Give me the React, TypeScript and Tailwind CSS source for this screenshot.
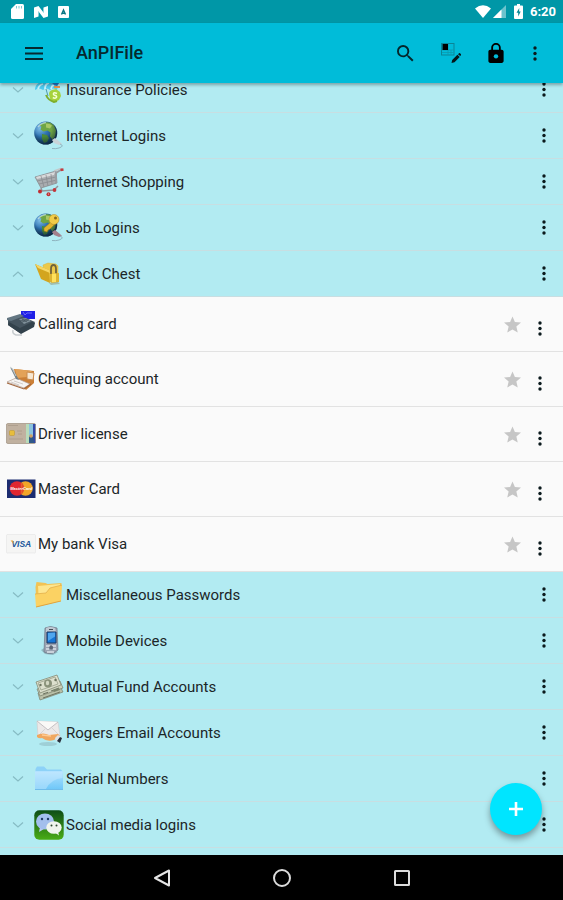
import { useState } from 'react';
import type { ReactNode } from 'react';

type Entry = { name: string; icon: ReactNode };
type Category = { name: string; icon: ReactNode; entries?: Entry[] };

const CATEGORIES: Category[] = [
  { name: 'Insurance Policies', icon: <InsuranceIcon /> },
  { name: 'Internet Logins', icon: <GlobeIcon /> },
  { name: 'Internet Shopping', icon: <CartIcon /> },
  { name: 'Job Logins', icon: <GlobeIcon withKey /> },
  {
    name: 'Lock Chest',
    icon: <LockFolderIcon />,
    entries: [
      { name: 'Calling card', icon: <PhoneCardIcon /> },
      { name: 'Chequing account', icon: <ChequeIcon /> },
      { name: 'Driver license', icon: <LicenseIcon /> },
      { name: 'Master Card', icon: <MasterCardIcon /> },
      { name: 'My bank Visa', icon: <VisaIcon /> },
    ],
  },
  { name: 'Miscellaneous Passwords', icon: <YellowFolderIcon /> },
  { name: 'Mobile Devices', icon: <MobileIcon /> },
  { name: 'Mutual Fund Accounts', icon: <MoneyIcon /> },
  { name: 'Rogers Email Accounts', icon: <MailIcon /> },
  { name: 'Serial Numbers', icon: <BlueFolderIcon /> },
  { name: 'Social media logins', icon: <ChatIcon /> },
];

export default function App() {
  const [open, setOpen] = useState<string | null>('Lock Chest');

  return (
    <div className="flex h-screen flex-col overflow-hidden bg-[#b2ebf2] font-['Roboto',sans-serif] text-[#1c2628]">
      <StatusBar />
      <AppBar />

      <main className="relative min-h-0 flex-1">
        <div className="h-full overflow-hidden">
          <ul className="-mt-4">
            {CATEGORIES.map(cat => (
              <li key={cat.name}>
                <CategoryRow
                  category={cat}
                  expanded={open === cat.name}
                  onToggle={() => setOpen(open === cat.name ? null : cat.name)}
                />
                {open === cat.name && cat.entries && (
                  <ul className="bg-[#fafafa]">
                    {cat.entries.map(entry => (
                      <EntryRow key={entry.name} entry={entry} />
                    ))}
                  </ul>
                )}
              </li>
            ))}
          </ul>
        </div>

        <button
          aria-label="Add"
          className="absolute right-[21px] bottom-5 flex size-[52px] items-center justify-center rounded-full bg-[#00e5ff] shadow-[0_4px_6px_rgba(0,0,0,0.35)]"
        >
          <svg viewBox="0 0 14 14" className="size-3.5" fill="#fff">
            <path d="M5.700 0h2.600v5.700H14v2.600H8.300V14H5.700V8.300H0V5.700h5.700z" />
          </svg>
        </button>
      </main>

      <NavBar />
    </div>
  );
}

function StatusBar() {
  return (
    <div className="flex h-[23px] shrink-0 items-center justify-between bg-[#0097a7] pr-[7px] pl-[11px] text-white">
      <div className="flex items-center gap-2.5">
        <svg viewBox="0 0 13 15" className="h-[15px] w-[13px]">
          <path d="M5 0h6.500Q13 0 13 1.500V13.500Q13 15 11.500 15H1.500Q0 15 0 13.500V5z" fill="#fff" />
          <path d="M5.500 2v2.500M8 2v2.500M10.500 2v2.500" stroke="#7fc9d2" strokeWidth="1" />
        </svg>
        <svg viewBox="0 0 14 12" className="h-3 w-3.5">
          <path d="M0 1.500 4.500 0 9.500 6.500V1.500L14 0v10.500L9.500 12 4.500 5.500v5L0 12z" fill="#fff" />
          <path d="M4.500 5.500v4M9.500 2v4.500" stroke="#8fd0d8" strokeWidth="1" />
        </svg>
        <svg viewBox="0 0 11 12" className="h-3 w-[11px]">
          <rect width="11" height="12" rx="1" fill="#fff" />
          <path d="M3.500 8.500 5.500 4 7.500 8.500M4.200 7.200h2.600" fill="none" stroke="#0a7784" strokeWidth="1.400" />
        </svg>
      </div>
      <div className="flex items-center">
        <svg viewBox="0 0 16 13" className="h-[13px] w-4">
          <path d="M8 13 0 3.500Q8-3 16 3.500z" fill="#fff" />
        </svg>
        <svg viewBox="0 0 13 13" className="ml-0.5 h-[13px] w-[13px]">
          <path d="M13 0v13H0z" fill="#6cc3cd" />
          <path d="M8.500 4.500V13H0z" fill="#fff" />
        </svg>
        <svg viewBox="0 0 9 15" className="ml-2 h-[15px] w-[9px]">
          <path d="M3 0h3v1.500h2Q9 1.500 9 2.500V14Q9 15 8 15H1Q0 15 0 14V2.500Q0 1.500 1 1.500h2z" fill="#fff" />
          <path d="M5.300 4 2.500 8.700h1.700V12.500L6.700 7.500H5.100z" fill="#0a8795" />
        </svg>
        <span className="ml-[7px] text-[13px] leading-4 font-bold">6:20</span>
      </div>
    </div>
  );
}

function AppBar() {
  return (
    <header className="z-10 flex h-[60px] shrink-0 items-center bg-[#00bcd9] pr-[11px] pl-4 text-black shadow-[0_2px_3px_rgba(0,0,0,0.3)]">
      <button aria-label="Menu" className="flex w-9 justify-center">
        <svg viewBox="0 0 18 13" className="h-[13px] w-[18px]" stroke="#062a30" strokeWidth="2">
          <path d="M0 1h18M0 6.500h18M0 12h18" />
        </svg>
      </button>
      <h1 className="ml-6 flex-1 text-[18px] leading-6 font-medium text-[#06282e]">AnPIFile</h1>
      <button aria-label="Search" className="flex w-[45px] justify-center">
        <svg viewBox="3 3 18 18" className="size-[17px]" fill="#04262b">
          <path d="M15.500 14h-.79l-.28-.27A6.471 6.471 0 0 0 16 9.500 6.500 6.500 0 1 0 9.500 16c1.610 0 3.090-.59 4.230-1.570l.27.28v.79l5 4.990L20.490 19l-4.990-5zm-6 0C7.010 14 5 11.990 5 9.500S7.010 5 9.500 5 14 7.010 14 9.500 11.990 14 9.500 14z" />
        </svg>
      </button>
      <button aria-label="Edit layout" className="flex w-[45px] justify-center">
        <svg viewBox="0 0 20 20" className="size-5">
          <rect x=".5" y=".5" width="12.500" height="11.500" fill="none" stroke="#0a8597" />
          <path d="M7 .500V12M.500 7H13M1 9.500H13M10 7V12" stroke="#0a9aae" strokeWidth=".8" />
          <path d="M1.500 1h5.500v6H1.500z" fill="#000" />
          <path d="m10.500 20 .7-3 5.200-5.200 2.300 2.300-5.200 5.200zM17 11.200l1-1q.5-.4 1 0l1 1q.5.500 0 1l-.9.900z" fill="#04161a" />
        </svg>
      </button>
      <button aria-label="Lock" className="flex w-[45px] justify-center">
        <svg viewBox="4 1 16 21" className="h-5 w-4" fill="#000">
          <path d="M18 8h-1V6c0-2.760-2.240-5-5-5S7 3.240 7 6v2H6c-1.100 0-2 .9-2 2v10c0 1.100.9 2 2 2h12c1.100 0 2-.9 2-2V10c0-1.100-.9-2-2-2zM8.900 6a3.100 3.100 0 0 1 6.200 0v2H8.900z" />
          <circle cx="12" cy="15" r="2.300" fill="#00bcd9" />
        </svg>
      </button>
      <button aria-label="More options" className="flex w-[34px] justify-center">
        <Kebab />
      </button>
    </header>
  );
}

function CategoryRow({ category, expanded, onToggle }: { category: Category; expanded: boolean; onToggle: () => void }) {
  return (
    <div className="flex h-[46px] items-center border-b border-[#c8dee2] pr-3">
      <button onClick={onToggle} aria-expanded={expanded} className="flex flex-1 items-center pl-3 text-left">
        <svg viewBox="0 0 12 6" className="mr-2.5 h-1.5 w-3" fill="none" stroke="#86bcc4" strokeWidth="1.200">
          {expanded ? <path d="M1 5.500 6 1l5 4.500" /> : <path d="m1 .500 5 4.500 5-4.500" />}
        </svg>
        <span className="mr-0.5 size-[30px]">{category.icon}</span>
        <span className="text-[15px] leading-5">{category.name}</span>
      </button>
      <button aria-label={`${category.name} options`} className="flex w-3.5 justify-center">
        <Kebab />
      </button>
    </div>
  );
}

function EntryRow({ entry }: { entry: Entry }) {
  const [starred, setStarred] = useState(false);

  return (
    <li className="flex h-[55px] items-center border-b border-[#e2e2e2] pr-4 pl-1.5">
      <span className="mr-0.5 size-[30px]">{entry.icon}</span>
      <span className="flex-1 text-[15px] leading-5">{entry.name}</span>
      <button aria-label={`Star ${entry.name}`} aria-pressed={starred} onClick={() => setStarred(!starred)} className="mr-3">
        <svg viewBox="2 2 20 19" className="size-[17px]" fill={starred ? '#ffb300' : '#c6c6c6'}>
          <path d="M12 17.270 18.180 21l-1.640-7.030L22 9.240l-7.190-.61L12 2 9.190 8.630 2 9.240l5.460 4.730L5.820 21z" />
        </svg>
      </button>
      <button aria-label={`${entry.name} options`} className="flex w-3.5 justify-center pt-2">
        <Kebab />
      </button>
    </li>
  );
}

function Kebab() {
  return (
    <svg viewBox="0 0 4 15" className="h-[15px] w-1" fill="#0b1a1d">
      <circle cx="2" cy="2" r="1.700" />
      <circle cx="2" cy="7.500" r="1.700" />
      <circle cx="2" cy="13" r="1.700" />
    </svg>
  );
}

function NavBar() {
  return (
    <nav className="z-10 flex h-[45px] shrink-0 items-center justify-center bg-black">
      <button aria-label="Back" className="flex w-[120px] justify-center">
        <svg viewBox="0 0 18 18" className="size-[18px]" fill="none" stroke="#e6e6e6" strokeWidth="2">
          <path d="M16 1.500v15L2 9z" strokeLinejoin="round" />
        </svg>
      </button>
      <button aria-label="Home" className="flex w-[120px] justify-center">
        <svg viewBox="0 0 18 18" className="size-[18px]" fill="none" stroke="#dcdcdc" strokeWidth="2">
          <circle cx="9" cy="9" r="8" />
        </svg>
      </button>
      <button aria-label="Recent apps" className="flex w-[120px] justify-center">
        <svg viewBox="0 0 18 18" className="size-[18px]" fill="none" stroke="#dcdcdc" strokeWidth="2">
          <rect x="2" y="2" width="14" height="14" rx=".5" />
        </svg>
      </button>
    </nav>
  );
}

// Row icons, all on a 30x30 grid

function InsuranceIcon() {
  return (
    <svg viewBox="0 0 30 30" className="size-full">
      <path d="M1 15Q1 9 7 7q2-5 8-3 5-2 7 3 3 3 1 8-4-3-7 0-4-3-7 0-4-3-8 0z" fill="#4fcbf0" />
      <path d="M4 14q1-4 5-5M11 14q0-5 4-6M17 14q1-4 3-4" stroke="#c6f4ff" strokeWidth="1.800" fill="none" />
      <path d="m18 9 7-6 3 1-5 7z" fill="#2577c9" />
      <path d="M20 12h6" stroke="#e8924a" strokeWidth="2" />
      <path d="m12 14 2 7" stroke="#4d99ae" strokeWidth="1" />
      <path d="M15 19q0-3 3-4l4-1 4 3 1 4-2 4-4 2-4-1-1-3z" fill="#a6d23c" />
      <path d="M12 20q2 5 8 7l3-1" stroke="#7fae2c" strokeWidth="2" fill="none" />
      <path d="M23 18.500q-3-1.500-3.500 0t1.800 2q2 .7 1 2-1.300 1.300-3.500 0" stroke="#f5ffd2" strokeWidth="1.500" fill="none" />
    </svg>
  );
}

function GlobeIcon({ withKey = false }: { withKey?: boolean }) {
  return (
    <svg viewBox="0 0 30 30" className="size-full">
      <defs>
        <radialGradient id="globe" cx=".25" cy=".3" r=".85">
          <stop offset="0" stopColor="#7fbde6" />
          <stop offset=".4" stopColor="#2f73b3" />
          <stop offset="1" stopColor="#0b2a55" />
        </radialGradient>
        <radialGradient id="globeShade" cx=".4" cy=".3" r=".7">
          <stop offset=".5" stopColor="#0b2a33" stopOpacity="0" />
          <stop offset="1" stopColor="#0b2233" stopOpacity=".65" />
        </radialGradient>
      </defs>
      <circle cx="11.700" cy="12" r="11.500" fill="url(#globe)" />
      <path d="M7 3q5-3 10-1l3 2.500 2 5-1 6-2.500 3-2.500-3 .5-4-3-2-4 1-3-2 1-3-2.500-1z" fill="#6fa544" />
      <path d="M12 2.500q4 0 6 2l-2 3-4-1z" fill="#a8c866" />
      <path d="m8 13 5 1 2 3-2 4-3 1-2-4z" fill="#4c8a38" />
      <circle cx="11.700" cy="12" r="11.500" fill="url(#globeShade)" />
      <path d="M4 6q3-4 8-4.500" stroke="#e1f5f1" strokeWidth="1.500" fill="none" opacity=".6" />
      {withKey && (
        <>
          <path d="m17 9-7 6v3l3 1 1-2 2-1 5-5z" fill="#e1b52d" stroke="#9b7619" strokeWidth=".5" />
          <circle cx="20" cy="6.500" r="5" fill="#f1cc48" stroke="#a8822a" strokeWidth=".5" />
          <circle cx="21.500" cy="5" r="1.500" fill="#8d6b18" />
        </>
      )}
      <path d="m18 19 3-2 5 4 2 2-3 1-5-2z" fill={withKey ? '#a3808c' : '#c9d3d8'} />
      <path d="M26 23q5 2-1 4-3 1-7 .500" stroke="#8fb5c0" strokeWidth="1" fill="none" />
    </svg>
  );
}

function CartIcon() {
  return (
    <svg viewBox="0 0 30 30" className="size-full">
      <path d="m1 10 21-6 1 12-16 5z" fill="#a9acaf" stroke="#8a8d90" strokeWidth=".8" />
      <path d="m2 10 19-5-1 3-17 4z" fill="#d9dadb" />
      <path d="m3 14 19-4M5 17l18-4M7 9l3 11M12 8l2 11M17 7l1 10" stroke="#85888c" strokeWidth=".7" />
      <path d="m22 16 0-10 6-4" stroke="#999da1" strokeWidth="1.800" fill="none" />
      <path d="m20 4 7-2.500" stroke="#c4c6c8" strokeWidth="1.500" />
      <path d="m26.500 3 3-.500" stroke="#c33b3f" strokeWidth="2.500" />
      <path d="m7 21 1 3 12-1 4-4" stroke="#909499" strokeWidth="1.500" fill="none" />
      <circle cx="6" cy="24.500" r="2" fill="#c02e32" />
      <circle cx="14.500" cy="27.300" r="2" fill="#c02e32" />
      <circle cx="20.500" cy="23" r="1.900" fill="#c2383d" />
      <circle cx="14.500" cy="27" r=".6" fill="#ecc" />
    </svg>
  );
}

function LockFolderIcon() {
  return (
    <svg viewBox="0 0 30 30" className="size-full">
      <path d="m9 6 5-2 8 1 2 2v15l-13-1z" fill="#edc949" stroke="#d9b23c" strokeWidth=".5" />
      <path d="m1 5 14 6 1 13-9-4z" fill="#d3a51f" />
      <path d="m1 5 14 6 1 3L4 9z" fill="#f6d765" />
      <path d="M17 15v-5q0-4 2.500-4T22 10v5" fill="none" stroke="#70633c" strokeWidth="1.800" />
      <path d="m16 15 9-1v9l-7 1-2-1z" fill="#ddb431" />
      <path d="m18 15 4-.500V23l-4 .5z" fill="#ffe15c" />
      <path d="m15 24 9-1 2 2-9 1z" fill="#8a7a45" opacity=".4" />
    </svg>
  );
}

function PhoneCardIcon() {
  return (
    <svg viewBox="0 0 30 30" className="size-full">
      <path d="M15 2h14v8H18l-3-3z" fill="#2020e6" />
      <path d="m17 3 2 3 2-2h5" stroke="#6d6af5" strokeWidth="1" fill="none" />
      <path d="m2 11 11-5 16 7-3 5-12 6-12-8z" fill="#45545f" />
      <path d="m1 9 13-4 4 2-13 5-4-1z" fill="#637682" />
      <path d="m3 13 11 6 12-6 3 1-1 4-13 7-13-9z" fill="#33424c" />
      <path d="m13 10 7-1 5 3-7 3z" fill="#7f909a" />
      <path d="m14 12 8-2M16 13l7-2M16 10l5 3" stroke="#3c4a54" strokeWidth=".7" />
      <path d="M7 21q-1 4 3 5h6" stroke="#c7cccf" strokeWidth="1.500" fill="none" />
    </svg>
  );
}

function ChequeIcon() {
  return (
    <svg viewBox="0 0 30 30" className="size-full">
      <path d="m8 5 20 2v12l-8 7L10 15z" fill="#cb7f36" />
      <path d="m9 5 17 2-5 6-10 1z" fill="#e3a258" />
      <path d="m21 8 7 1-1 7-6-1z" fill="#f7e7d1" stroke="#c98a4c" strokeWidth="1" />
      <path d="m1 18 9-4 14 6-6 4z" fill="#f6f4f2" stroke="#b09a8c" strokeWidth=".7" />
      <path d="m5 18 8 3M8 17l9 3" stroke="#c9c2bd" strokeWidth=".8" />
      <path d="m1 19 17 6 7-5" stroke="#a3663c" strokeWidth="1.100" fill="none" />
      <path d="m4 3 3 2 6 11-3-1z" fill="#748085" />
      <path d="m4 3 2 1 4 8" stroke="#d8dfe1" strokeWidth=".8" fill="none" />
    </svg>
  );
}

function LicenseIcon() {
  return (
    <svg viewBox="0 0 30 30" className="size-full">
      <rect x=".4" y="4.500" width="29.200" height="20" rx="1.500" fill="#c0b1a0" stroke="#9d8f80" strokeWidth=".7" />
      <path d="M20 5h4v19h-4z" fill="#b8dbba" />
      <path d="M23 5h4v19h-4z" fill="#8cc4de" />
      <path d="M27 5h2.300v19H27z" fill="#3048a8" />
      <rect x="3.500" y="11.500" width="5" height="5" rx="1" fill="#e7bd3b" stroke="#b8922f" strokeWidth=".5" />
      <path d="M2 6.500h10M11 12h5M12 15h4M3 20h14" stroke="#a99a89" strokeWidth=".8" />
      <path d="M23 18q2-3 4 0l1 6h-5z" fill="#305987" />
      <circle cx="25" cy="17" r="1.800" fill="#d3a064" />
    </svg>
  );
}

function MasterCardIcon() {
  return (
    <svg viewBox="0 0 30 30" className="size-full">
      <rect x="1" y="5.500" width="28.500" height="18.500" fill="#1c2c70" />
      <circle cx="19.500" cy="14.500" r="7.300" fill="#f1a529" />
      <circle cx="11" cy="14.500" r="7.300" fill="#df2630" />
      <path d="M15.300 9v11M17 10v9" stroke="#ee8b28" strokeWidth=".7" />
      <text x="15.200" y="16.200" textAnchor="middle" fontSize="4" fontWeight="700" fontStyle="italic" fill="#fff" fontFamily="Liberation Sans, sans-serif">MasterCard</text>
    </svg>
  );
}

function VisaIcon() {
  return (
    <svg viewBox="0 0 30 30" className="size-full">
      <rect x=".5" y="5.500" width="29" height="18.500" rx="1" fill="#f5f5f4" stroke="#e6e6e6" strokeWidth=".7" />
      <text x="15.300" y="18" textAnchor="middle" fontSize="8.500" fontWeight="700" fontStyle="italic" fill="#21579a" fontFamily="Liberation Sans, sans-serif">VISA</text>
      <path d="M4.500 11.500H7l1 3.500z" fill="#e8a33a" />
    </svg>
  );
}

function YellowFolderIcon() {
  return (
    <svg viewBox="0 0 30 30" className="size-full">
      <path d="m1.500 7 1-5 9 1 2 1 14-1-1 18-24 6z" fill="#f2c354" />
      <path d="m4 6 22-2v14L5 24z" fill="#fde68f" />
      <path d="m1 14 11-1 4-5 12-3-1 16-25 6z" fill="#fbd263" />
      <path d="m1 14 11-1 4-5 12-3" stroke="#e3b04a" strokeWidth=".8" fill="none" />
      <path d="m2 27 25-6" stroke="#e0a440" strokeWidth="1" />
    </svg>
  );
}

function MobileIcon() {
  return (
    <svg viewBox="0 0 30 30" className="size-full">
      <path d="m7 24 5-3 12 5-5 3-8-1z" fill="#6d8794" opacity=".5" />
      <path d="M11 2q5-3 12 0l1 22q-6 6-14 2z" fill="#9aa3b2" stroke="#6d7787" strokeWidth=".7" />
      <path d="M12 2q4-2 9 0l1 4H12z" fill="#bfc9d3" />
      <path d="M13 6h9v11h-9z" fill="#1676d5" stroke="#1d3960" strokeWidth="1" />
      <path d="m14 7 7-.500v4L14 15z" fill="#4fa6ee" />
      <path d="M12 20h4M18 20h4M12 23h3M19 23h3M13 26h7" stroke="#dae1e7" strokeWidth="1.300" />
      <circle cx="17.200" cy="21.500" r="1.900" fill="#5c6674" />
      <path d="M15 3.500h4" stroke="#424c58" strokeWidth="1" />
    </svg>
  );
}

function MoneyIcon() {
  return (
    <svg viewBox="0 0 30 30" className="size-full">
      <path d="m4 21 22-7 3 6-23 8z" fill="#b9bfa8" stroke="#7a806c" strokeWidth=".7" />
      <path d="m3 17 23-8 3 7-23 8z" fill="#cad0bb" stroke="#7a806c" strokeWidth=".7" />
      <path d="m2 10 21-7 4 10-21 8z" fill="#dcdfcd" stroke="#858b76" strokeWidth=".8" />
      <path d="m4 11 17-6 3 7-17 6z" fill="none" stroke="#9aa18c" strokeWidth=".8" />
      <ellipse cx="14" cy="11.500" rx="4" ry="4" fill="#8a927a" />
      <ellipse cx="13.500" cy="11" rx="1.700" ry="2.300" fill="#d3d7c3" />
      <circle cx="6.500" cy="13" r="1.200" fill="#6d7560" />
      <circle cx="21.500" cy="8" r="1.200" fill="#6d7560" />
      <path d="m9 22 5-1.700M17 19l8-3M9 26l17-6" stroke="#636a58" strokeWidth=".9" />
      <path d="m19 18 6-2 1 2-6 2z" fill="#7b846c" />
    </svg>
  );
}

function MailIcon() {
  return (
    <svg viewBox="0 0 30 30" className="size-full">
      <ellipse cx="14" cy="26" rx="9" ry="2" fill="#89b4bc" opacity=".5" />
      <path d="m3 3 21 1 2 14-22 1z" fill="#ece9e8" stroke="#d2cfd0" strokeWidth=".7" />
      <path d="m3 3 11 9L24 4" fill="#faf9f7" stroke="#c4c0c3" strokeWidth="1" />
      <path d="m4 18 7-7M25 17l-7-7" stroke="#d0cdce" strokeWidth=".8" />
      <path d="M3 17q6-3 12 0l9-1 2 2-6 4q-7 2-12-2-3 1-5-1z" fill="#f0a75f" />
      <path d="m8 17 9 1" stroke="#ffcb92" strokeWidth="1.500" />
      <path d="m21 20 3-3 4 3-2 4-4-1z" fill="#dce2e7" />
      <path d="m23 23 3-4 2 1-2 5z" fill="#26303b" />
    </svg>
  );
}

function BlueFolderIcon() {
  return (
    <svg viewBox="0 0 30 30" className="size-full">
      <defs>
        <linearGradient id="blueFolder" x2="0" y2="1">
          <stop offset="0" stopColor="#b4e3ff" />
          <stop offset="1" stopColor="#6cc6f8" />
        </linearGradient>
      </defs>
      <path d="M1.500 5 3 2.500h7l3 3h14l1.500 2v18H1.500z" fill="#8dd2f8" />
      <path d="M1 7h28v19H1z" fill="url(#blueFolder)" />
      <path d="M1 8h27.500v6Q17 15 12 25H1z" fill="#cdecff" opacity=".45" />
      <path d="M1 25.500h28" stroke="#6fbcea" strokeWidth="1" />
    </svg>
  );
}

function ChatIcon() {
  return (
    <svg viewBox="0 0 30 30" className="size-full">
      <defs>
        <linearGradient id="chat" x2="0" y2="1">
          <stop offset="0" stopColor="#0e4d16" />
          <stop offset="1" stopColor="#49ac16" />
        </linearGradient>
      </defs>
      <rect x=".3" y=".3" width="29.400" height="29.400" rx="5" fill="url(#chat)" />
      <path d="m6 17-1 5 5-3z" fill="#b8cbed" />
      <ellipse cx="11" cy="11.500" rx="9" ry="8" fill="#a3bfed" />
      <ellipse cx="20" cy="17.500" rx="7.700" ry="6.300" fill="#f0f5ed" />
      <circle cx="8" cy="9" r="1.200" fill="#223c67" />
      <circle cx="14" cy="9" r="1.200" fill="#223c67" />
      <circle cx="17.500" cy="15.500" r="1" fill="#2d482f" />
      <circle cx="22.500" cy="15.500" r="1" fill="#2d482f" />
      <path d="m21 22.500 4 3-1-4z" fill="#f0f5ed" />
    </svg>
  );
}
